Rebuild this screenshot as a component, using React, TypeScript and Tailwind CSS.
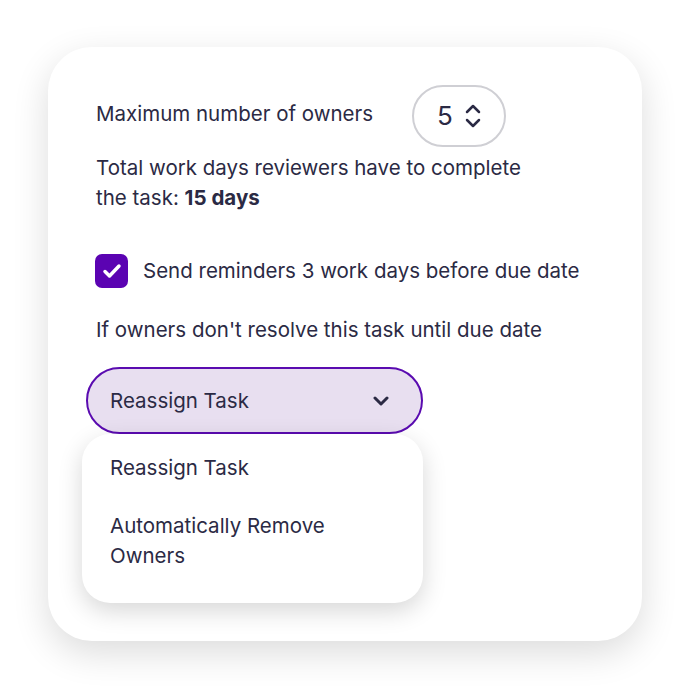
export default function App() {
    return (
        <div className="w-[690px] h-[690px] bg-white flex items-start justify-start" style={{ fontFamily: "Inter, 'Noto Sans', sans-serif" }}>
            <div className="mt-[47px] ml-[48px] w-[594px] h-[594px] bg-white rounded-[44px] shadow-[0_12px_36px_rgba(0,0,0,0.14)] pt-[38px] pl-[48px] text-[#2b2a44] text-[20.5px] leading-[30px]">
                {/* Owners row */}
                <div className="flex items-center">
                    <span className="w-[316px] -mt-[5px]">Maximum number of owners</span>
                    <div className="w-[94px] h-[62px] rounded-full border-2 border-[#cfcfd4] flex items-center justify-center gap-[12px]">
                        <span className="text-[26px] leading-none">5</span>
                        <svg width="16" height="24" viewBox="0 0 16 24" fill="none" stroke="#2b2a44" strokeWidth={2.5} strokeLinecap="round" strokeLinejoin="round">
                            <path d="M2 8l6-6 6 6" />
                            <path d="M2 16l6 6 6-6" />
                        </svg>
                    </div>
                </div>

                <p className="mt-[6px] w-[440px]">
                    Total work days reviewers have to complete the task: <b className="font-bold">15 days</b>
                </p>

                {/* Reminder checkbox */}
                <div className="mt-[41px] flex items-center gap-[15px] -ml-[1px]">
                    <div className="w-[33px] h-[34px] rounded-[7px] bg-[#5b03b2] flex items-center justify-center">
                        <svg width="20" height="16" viewBox="0 0 20 16" fill="none" stroke="white" strokeWidth={3.5} strokeLinecap="round" strokeLinejoin="round">
                            <path d="M3 8.5l4.5 4.5L17 3" />
                        </svg>
                    </div>
                    <span>Send reminders 3 work days before due date</span>
                </div>

                <p className="mt-[27px]">If owners don't resolve this task until due date</p>

                {/* Select + menu */}
                <div className="mt-[22px] -ml-[10px] w-[337px]">
                    <div className="h-[67px] rounded-full bg-[#e8dff0] border-2 border-[#5a0bb0] flex items-center justify-between pl-[22px] pr-[32px]">
                        <span>Reassign Task</span>
                        <svg width="16" height="10" viewBox="0 0 16 10" fill="none" stroke="#2b2a44" strokeWidth={3} strokeLinecap="round" strokeLinejoin="round">
                            <path d="M2 2l6 6 6-6" />
                        </svg>
                    </div>
                    <div className="-ml-[4px] w-[341px] h-[169px] bg-white rounded-[28px] shadow-[0_8px_24px_rgba(0,0,0,0.16)] pl-[28px] pt-[19px]">
                        <p>Reassign Task</p>
                        <p className="mt-[28px] w-[250px]">Automatically Remove Owners</p>
                    </div>
                </div>
            </div>
        </div>
    );
}
